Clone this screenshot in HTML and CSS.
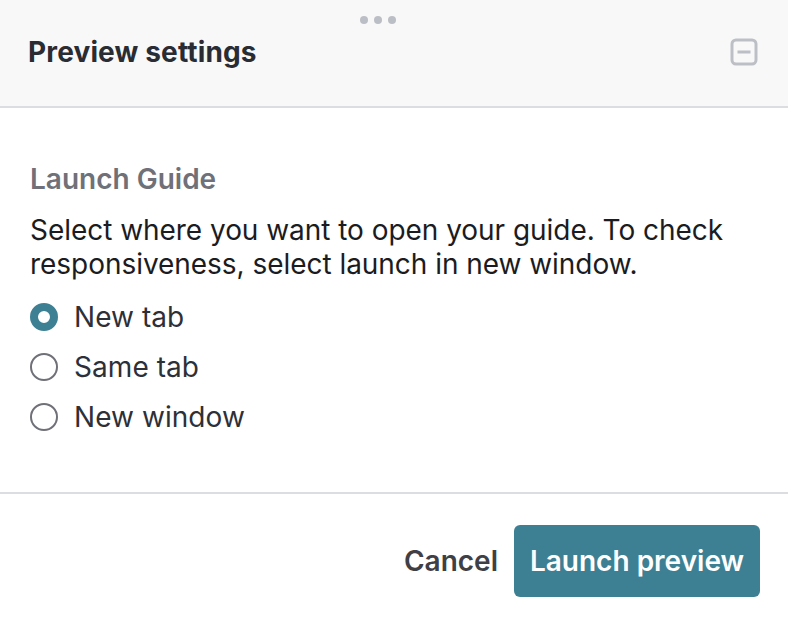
FILE: index.html
```html
<!DOCTYPE html>
<html lang="en">
<head>
<meta charset="utf-8">
<title>Preview settings</title>
<link rel="stylesheet" href="styles.css">
</head>
<body>
<div class="panel">
  <header class="header">
    <div class="grip"><span></span><span></span><span></span></div>
    <h1 class="title">Preview settings</h1>
    <svg class="minimize" width="28" height="28" viewBox="0 0 28 28" aria-hidden="true">
      <rect x="2" y="2" width="24" height="24" rx="4" fill="none" stroke="#bdbfc6" stroke-width="3"/>
      <line x1="7.5" y1="14" x2="20.5" y2="14" stroke="#bdbfc6" stroke-width="3"/>
    </svg>
  </header>
  <main class="body">
    <h2 class="section">Launch Guide</h2>
    <p class="desc">Select where you want to open your guide. To check responsiveness, select launch in new window.</p>
    <div class="options">
      <label class="option"><span class="radio checked"></span>New tab</label>
      <label class="option"><span class="radio"></span>Same tab</label>
      <label class="option"><span class="radio"></span>New window</label>
    </div>
  </main>
  <footer class="footer">
    <button class="cancel">Cancel</button>
    <button class="launch">Launch preview</button>
  </footer>
</div>
</body>
</html>
```
FILE: styles.css
```css
* { box-sizing: border-box; }
html, body { margin: 0; padding: 0; background: #fff; }
body { font-family: Inter, "Liberation Sans", sans-serif; color: #2e3038; }
.panel { width: 788px; height: 618px; display: flex; flex-direction: column; overflow: hidden; }
.header {
  height: 108px; background: #f8f8f8; border-bottom: 2px solid #dcdde0;
  padding: 0 30px 2px 28px; display: flex; align-items: center; justify-content: space-between;
  position: relative;
}
.grip { position: absolute; top: 16px; left: 360px; display: flex; gap: 6px; }
.grip span { width: 8px; height: 8px; border-radius: 50%; background: #bcbec6; }
.title { margin: 0; font-size: 28px; font-weight: 700; line-height: 32px; letter-spacing: 0.14px; color: #2a2c34; }
.minimize { display: block; }
.body { flex: 1; padding: 54px 30px 0; }
.section { margin: 0; font-size: 28px; font-weight: 600; line-height: 34px; color: #6f7078; }
.desc { margin: 17px 0 0; font-size: 28px; line-height: 34px; color: #1b1c22; letter-spacing: -0.04px; }
.options { margin-top: 11px; display: flex; flex-direction: column; }
.option { height: 50px; display: flex; align-items: center; gap: 16px; font-size: 28px; letter-spacing: 0.06px; }
.radio { width: 28px; height: 28px; border-radius: 50%; border: 2px solid #6f7078; background: #fff; }
.radio.checked { border: 8px solid #3d8094; }
.footer {
  height: 126px; border-top: 2px solid #dcdde0; padding: 31px 28px 0 0;
  display: flex; justify-content: flex-end; align-items: flex-start; gap: 16px;
}
button { font-family: inherit; font-size: 28px; font-weight: 600; border: 0; cursor: pointer; }
.cancel { background: none; color: #3f4046; padding: 0; height: 72px; }
.launch { background: #3d8094; color: #fff; height: 72px; width: 246px; border-radius: 6px; padding: 0; }
```
